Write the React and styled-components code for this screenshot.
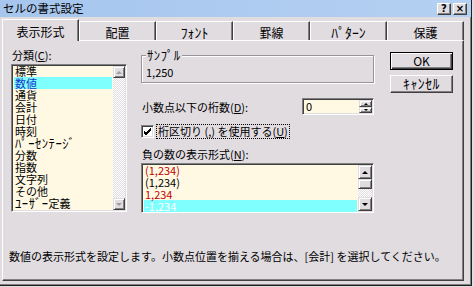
import React from 'react';
import styled, { createGlobalStyle } from 'styled-components';

const GlobalStyle = createGlobalStyle`
  html, body {
    margin: 0;
    padding: 0;
    background: #e0dce0;
  }
  body {
    font-family: "Noto Sans CJK JP", "Noto Sans", sans-serif;
    font-size: 11px;
    color: #000;
  }
`;

const Window = styled.div`
  width: 472px;
  height: 286px;
  box-sizing: border-box;
  background: #e0dce0;
  border-right: 1px solid #202020;
  border-bottom: 1px solid #202020;
  box-shadow: inset -1px -1px 0 #808080;
  display: flex;
  flex-direction: column;
`;

const TitleBar = styled.div`
  height: 17px;
  flex: none;
  display: flex;
  align-items: center;
  padding: 0 4px 0 3px;
  background: linear-gradient(90deg, #a6c6ee, #b4d0f2);
`;

const Title = styled.span`
  flex: 1;
  font-size: 11.5px;
  line-height: 17px;
`;

const TitleButton = styled.div`
  width: 14px;
  height: 12px;
  margin-left: 2px;
  box-sizing: border-box;
  background: #e0dce0;
  border: 1px solid;
  border-color: #fff #404040 #404040 #fff;
  box-shadow: inset -1px -1px 0 #808080;
  font-family: "DejaVu Sans", sans-serif;
  font-weight: bold;
  font-size: 10px;
  line-height: 10px;
  text-align: center;
`;

/* half-width katakana: Noto draws them small, so bump them a little */
const Kana = styled.span`
  font-size: 1.15em;
  line-height: 1px;
  letter-spacing: ${(p) => p.$ls ?? 0.5}px;
`;

const TabRow = styled.div`
  height: 21px;
  margin-top: 2px;
  padding-left: 2px;
  display: flex;
  align-items: flex-end;
  flex: none;
`;

const Tab = styled.div`
  width: 77px;
  height: ${(p) => (p.$active ? 22 : 19)}px;
  margin-bottom: ${(p) => (p.$active ? -1 : 0)}px;
  position: relative;
  z-index: ${(p) => (p.$active ? 1 : 0)};
  box-sizing: border-box;
  background: #e0dce0;
  border-top: 1px solid #fff;
  border-left: 1px solid #fff;
  border-right: 1px solid #404040;
  box-shadow: inset -1px 0 0 #808080;
  font-size: 12px;
  line-height: 14px;
  padding-top: ${(p) => (p.$active ? 5 : 4)}px;
  text-align: center;
`;

const Panel = styled.div`
  width: 462px;
  height: 241px;
  margin-left: 2px;
  box-sizing: border-box;
  border: 1px solid;
  border-color: #fff #404040 #404040 #fff;
  box-shadow: inset -1px -1px 0 #808080;
  padding: 7px 0 0 8px;
  display: flex;
  flex-direction: column;
`;

const TopRow = styled.div`
  display: flex;
`;

const Column = styled.div`
  width: ${(p) => p.$w}px;
  margin-left: ${(p) => p.$ml || 0}px;
  display: flex;
  flex-direction: column;
`;

const Label = styled.div`
  height: ${(p) => p.$h || 16}px;
  margin-top: ${(p) => p.$mt || 0}px;
  line-height: 14px;
  padding-left: 1px;
`;

const ListBox = styled.div`
  height: ${(p) => p.$h}px;
  box-sizing: border-box;
  border: 1px solid;
  border-color: #808080 #fff #fff #808080;
  box-shadow: inset 1px 1px 0 #404040, inset -1px -1px 0 #e0dce0;
  background: #fff9e4;
  display: flex;
  overflow: hidden;
`;

const Items = styled.div`
  flex: 1;
  padding-left: 2px;
  overflow: hidden;
`;

const Item = styled.div`
  height: 12px;
  line-height: 12px;
  padding-left: 1px;
  margin-right: 1px;
  white-space: nowrap;
  color: ${(p) => (p.$sel ? p.$selColor : p.$red ? '#c00000' : '#000')};
  background: ${(p) => (p.$sel ? '#80ffff' : 'transparent')};
`;

const ScrollBar = styled.div`
  width: ${(p) => p.$w}px;
  margin: ${(p) => (p.$inset ? '1px 1px 1px 0' : '0')};
  display: flex;
  flex-direction: column;
`;

const ScrollButton = styled.div`
  height: ${(p) => p.$h}px;
  flex: none;
  box-sizing: border-box;
  background: #e0dce0;
  border: 1px solid;
  border-color: #e0dce0 #404040 #404040 #e0dce0;
  box-shadow: inset 1px 1px 0 #fff, inset -1px -1px 0 #808080;
  display: flex;
  align-items: center;
  justify-content: center;
`;

const Track = styled.div`
  flex: 1;
  background: repeating-conic-gradient(#fff 0 25%, #e0dce0 0 50%) 0 0 / 2px 2px;
`;

const Arrow = styled.span`
  width: 0;
  height: 0;
  border-left: ${(p) => p.$s}px solid transparent;
  border-right: ${(p) => p.$s}px solid transparent;
  ${(p) => (p.$down ? 'border-top' : 'border-bottom')}: ${(p) => p.$s}px solid ${(p) => p.$c};
`;

const Group = styled.div`
  position: relative;
  height: 28px;
  margin-top: 7px;
  box-sizing: border-box;
  border: 1px solid #98949a;
  box-shadow: inset 1px 1px 0 #fff, 1px 1px 0 #fff;
  padding: 10px 0 0 4px;
  line-height: 12px;
`;

const Legend = styled.span`
  position: absolute;
  top: -7px;
  left: 4px;
  padding: 0 1px;
  background: #e0dce0;
  line-height: 12px;
`;

const FieldRow = styled.div`
  display: flex;
  align-items: center;
  justify-content: space-between;
  height: 17px;
  margin-top: 15px;
`;

const SpinBox = styled.div`
  width: 72px;
  height: 17px;
  box-sizing: border-box;
  border: 1px solid;
  border-color: #808080 #fff #fff #808080;
  box-shadow: inset 1px 1px 0 #404040, inset -1px -1px 0 #e0dce0;
  background: #fff9e4;
  padding: 1px;
  display: flex;
`;

const SpinValue = styled.div`
  flex: 1;
  padding-left: 2px;
  line-height: 13px;
`;

const CheckRow = styled.div`
  display: flex;
  align-items: center;
  height: 15px;
  margin-top: 9px;
`;

const CheckBox = styled.div`
  width: 13px;
  height: 13px;
  box-sizing: border-box;
  border: 1px solid;
  border-color: #808080 #fff #fff #808080;
  box-shadow: inset 1px 1px 0 #404040, inset -1px -1px 0 #e0dce0;
  background: #fff;
  display: flex;
  align-items: center;
  justify-content: center;
`;

const FocusLabel = styled.div`
  margin-left: 2px;
  padding: 0 1px;
  border: 1px dotted #000;
  line-height: 13px;
  white-space: nowrap;
`;

const Button = styled.div`
  height: 18px;
  margin-top: ${(p) => p.$mt}px;
  box-sizing: border-box;
  background: #e0dce0;
  border: 1px solid;
  border-color: ${(p) => (p.$default ? '#000' : '#fff #404040 #404040 #fff')};
  box-shadow: ${(p) =>
    p.$default
      ? 'inset 1px 1px 0 #fff, inset -1px -1px 0 #404040, inset -2px -2px 0 #808080'
      : 'inset -1px -1px 0 #808080'};
  font-size: 12px;
  line-height: 15px;
  text-align: center;
`;

const Description = styled.div`
  margin: auto 0 18px -2px;
  line-height: 12px;
  white-space: nowrap;
`;

const tabs = [
  '表示形式',
  '配置',
  <Kana $ls={0}>ﾌｫﾝﾄ</Kana>,
  '罫線',
  <Kana $ls={0}>ﾊﾟﾀｰﾝ</Kana>,
  '保護',
];

const categories = [
  '標準',
  '数値',
  '通貨',
  '会計',
  '日付',
  '時刻',
  <Kana>ﾊﾟｰｾﾝﾃｰｼﾞ</Kana>,
  '分数',
  '指数',
  '文字列',
  'その他',
  <>
    <Kana>ﾕｰｻﾞｰ</Kana>定義
  </>,
];

const negatives = [
  { text: '(1,234)', red: true },
  { text: '(1,234)' },
  { text: '1,234', red: true },
  { text: '-1,234', red: true, sel: true },
];

const App = () => (
  <>
    <GlobalStyle />
    <Window>
      <TitleBar>
        <Title>セルの書式設定</Title>
        <TitleButton>?</TitleButton>
        <TitleButton>×</TitleButton>
      </TitleBar>
      <TabRow>
        {tabs.map((t, i) => (
          <Tab key={i} $active={i === 0}>
            {t}
          </Tab>
        ))}
      </TabRow>
      <Panel>
        <TopRow>
          <Column $w={116}>
            <Label>
              分類(<u>C</u>):
            </Label>
            <ListBox $h={148}>
              <Items>
                {categories.map((c, i) => (
                  <Item key={i} $sel={i === 1} $selColor="#1838c8">
                    {c}
                  </Item>
                ))}
              </Items>
              <ScrollBar $w={12} $inset>
                <ScrollButton $h={12}>
                  <Arrow $s={3} $c="#a09ca0" />
                </ScrollButton>
                <Track />
                <ScrollButton $h={12}>
                  <Arrow $s={3} $c="#a09ca0" $down />
                </ScrollButton>
              </ScrollBar>
            </ListBox>
          </Column>

          <Column $w={233} $ml={14}>
            <Group>
              <Legend>
                <Kana>ｻﾝﾌﾟﾙ</Kana>
              </Legend>
              1,250
            </Group>
            <FieldRow>
              <Label $h={14}>
                小数点以下の桁数(<u>D</u>):
              </Label>
              <SpinBox>
                <SpinValue>0</SpinValue>
                <ScrollBar $w={13}>
                  <ScrollButton $h={7}>
                    <Arrow $s={2} $c="#000" />
                  </ScrollButton>
                  <ScrollButton $h={6}>
                    <Arrow $s={2} $c="#000" $down />
                  </ScrollButton>
                </ScrollBar>
              </SpinBox>
            </FieldRow>
            <CheckRow>
              <CheckBox>
                <svg width="9" height="9" viewBox="0 0 9 9">
                  <path d="M1 4 L3 6 L8 1 M1 5 L3 7 L8 2 M1 6 L3 8 L8 3" stroke="#000" strokeWidth="1" fill="none" />
                </svg>
              </CheckBox>
              <FocusLabel>
                桁区切り (,) を使用する(<u>U</u>)
              </FocusLabel>
            </CheckRow>
            <Label $h={16} $mt={8}>
              負の数の表示形式(<u>N</u>):
            </Label>
            <ListBox $h={50}>
              <Items>
                {negatives.map((n, i) => (
                  <Item key={i} $red={n.red} $sel={n.sel} $selColor="#fff">
                    {n.text}
                  </Item>
                ))}
              </Items>
              <ScrollBar $w={14} $inset>
                <ScrollButton $h={14}>
                  <Arrow $s={3} $c="#000" />
                </ScrollButton>
                <ScrollButton $h={10} />
                <Track />
                <ScrollButton $h={14}>
                  <Arrow $s={3} $c="#000" $down />
                </ScrollButton>
              </ScrollBar>
            </ListBox>
          </Column>

          <Column $w={63} $ml={16}>
            <Button $mt={4} $default>
              OK
            </Button>
            <Button $mt={5}>
              <Kana>ｷｬﾝｾﾙ</Kana>
            </Button>
          </Column>
        </TopRow>
        <Description>
          数値の表示形式を設定します。小数点位置を揃える場合は、[会計] を選択してください。
        </Description>
      </Panel>
    </Window>
  </>
);

export default App;
